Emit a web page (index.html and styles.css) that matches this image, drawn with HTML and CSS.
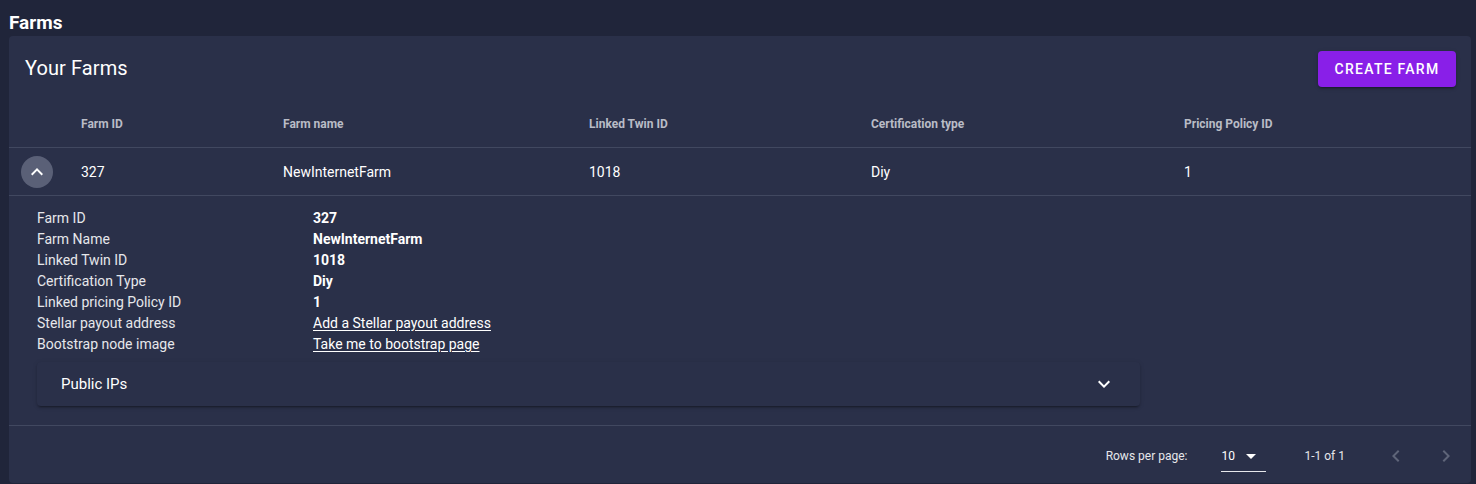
FILE: index.html
```html
<!DOCTYPE html>
<html>
<head>
<meta charset="utf-8">
<link rel="stylesheet" href="styles.css">
</head>
<body>
<div class="page">
  <h3 class="page-title">Farms</h3>
  <section class="card">
    <div class="card-head">
      <h2 class="card-title">Your Farms</h2>
      <button class="btn-primary">CREATE FARM</button>
    </div>
    <div class="table">
      <div class="row head">
        <div class="cell"></div>
        <div class="cell">Farm ID</div>
        <div class="cell">Farm name</div>
        <div class="cell">Linked Twin ID</div>
        <div class="cell">Certification type</div>
        <div class="cell">Pricing Policy ID</div>
      </div>
      <div class="row data">
        <div class="cell cell-btn">
          <span class="expand-btn">
            <svg width="24" height="24" viewBox="0 0 24 24"><path d="M7.41 15.41 12 10.83l4.59 4.58L18 14l-6-6-6 6z" fill="#fff"/></svg>
          </span>
        </div>
        <div class="cell">327</div>
        <div class="cell">NewInternetFarm</div>
        <div class="cell">1018</div>
        <div class="cell">Diy</div>
        <div class="cell">1</div>
      </div>
      <div class="expanded">
        <div class="details">
          <div class="dl">Farm ID</div><div class="dv">327</div>
          <div class="dl">Farm Name</div><div class="dv">NewInternetFarm</div>
          <div class="dl">Linked Twin ID</div><div class="dv">1018</div>
          <div class="dl">Certification Type</div><div class="dv">Diy</div>
          <div class="dl">Linked pricing Policy ID</div><div class="dv">1</div>
          <div class="dl">Stellar payout address</div><div class="dv link">Add a Stellar payout address</div>
          <div class="dl">Bootstrap node image</div><div class="dv link">Take me to bootstrap page</div>
        </div>
        <div class="panel">
          <span class="panel-title">Public IPs</span>
          <svg width="24" height="24" viewBox="0 0 24 24"><path d="M7.41 8.59 12 13.17l4.59-4.58L18 10l-6 6-6-6z" fill="#fff"/></svg>
        </div>
      </div>
    </div>
    <div class="footer">
      <span class="rpp">Rows per page:</span>
      <span class="select">
        <span class="select-val">10</span>
        <svg width="24" height="24" viewBox="0 0 24 24"><path d="M7 10l5 5 5-5z" fill="#fff"/></svg>
      </span>
      <span class="range">1-1 of 1</span>
      <span class="nav">
        <svg width="24" height="24" viewBox="0 0 24 24"><path d="M15.41 16.59 10.83 12l4.58-4.59L14 6l-6 6 6 6z" fill="#5f6579"/></svg>
      </span>
      <span class="nav">
        <svg width="24" height="24" viewBox="0 0 24 24"><path d="M8.59 16.59 13.17 12 8.59 7.41 10 6l6 6-6 6z" fill="#5f6579"/></svg>
      </span>
    </div>
  </section>
</div>
</body>
</html>
```

FILE: styles.css
```css
* { box-sizing: border-box; }
html, body {
  margin: 0;
  padding: 0;
  background: #20253a;
  font-family: Roboto, "Liberation Sans", sans-serif;
  color: #fff;
}
.page {
  padding: 0 5px 0 9px;
  height: 484px;
  overflow: hidden;
}
.page-title {
  margin: 0;
  height: 36px;
  padding-top: 11px;
  font-size: 19px;
  font-weight: 700;
  line-height: 24px;
}
.card {
  background: #2a3049;
  border-radius: 4px;
  height: 447px;
}
.card-head {
  display: flex;
  align-items: center;
  justify-content: space-between;
  padding: 0 15px 0 16px;
  height: 64px;
}
.card-title {
  margin: 0;
  font-size: 20px;
  font-weight: 400;
  line-height: 36px;
  letter-spacing: 0.1px;
}
.btn-primary {
  height: 36px;
  width: 138px;
  margin-top: 2px;
  border: none;
  border-radius: 4px;
  background: #891fe8;
  color: #fff;
  font-family: Roboto, sans-serif;
  font-size: 14px;
  font-weight: 500;
  letter-spacing: 1.25px;
  box-shadow: 0 3px 1px -2px rgba(0,0,0,.2), 0 2px 2px 0 rgba(0,0,0,.14), 0 1px 5px 0 rgba(0,0,0,.12);
}
.row {
  display: grid;
  grid-template-columns: 56px 202px 306px 282px 313px 1fr;
  align-items: center;
  border-bottom: 1px solid #414860;
}
.row.head {
  height: 48px;
  font-size: 12px;
  font-weight: 700;
  color: #b9bcc6;
}
.row.data {
  height: 48px;
  font-size: 14px;
}
.cell { padding: 0 16px; }
.cell-btn { padding: 0 0 0 12px; display: flex; }
.expand-btn {
  width: 32px;
  height: 32px;
  border-radius: 50%;
  background: #5a6077;
  display: flex;
  align-items: center;
  justify-content: center;
}
.expanded {
  padding: 12px 331px 19px 28px;
  border-bottom: 1px solid #414860;
}
.details {
  display: grid;
  grid-template-columns: 276px 1fr;
  font-size: 14px;
  line-height: 21px;
}
.dl { color: #e6e7eb; }
.dv { font-weight: 700; }
.dv.link { font-weight: 400; text-decoration: underline; text-underline-offset: 2px; }
.panel {
  margin-top: 7px;
  height: 44px;
  display: flex;
  align-items: center;
  justify-content: space-between;
  padding: 0 24px;
  background: #2a3049;
  border-radius: 4px;
  box-shadow: 0 3px 1px -2px rgba(0,0,0,.2), 0 2px 2px 0 rgba(0,0,0,.14), 0 1px 5px 0 rgba(0,0,0,.12);
}
.panel-title { font-size: 15px; }
.footer {
  display: flex;
  align-items: center;
  justify-content: flex-end;
  height: 57px;
  padding-top: 2px;
  padding-right: 13px;
  font-size: 12px;
}
.rpp { color: #e6e7eb; margin-right: 34px; }
.select {
  display: flex;
  align-items: center;
  width: 45px;
  height: 30px;
  border-bottom: 1px solid #e6e7eb;
  justify-content: space-between;
  margin-top: 2px;
  margin-right: 38px;
  font-size: 12px;
}
.select svg { margin-right: 3px; }
.range { margin-right: 13px; color: #e6e7eb; }
.nav { display: flex; width: 24px; margin-left: 26px; }
.range + .nav { margin-left: 26px; }
```
